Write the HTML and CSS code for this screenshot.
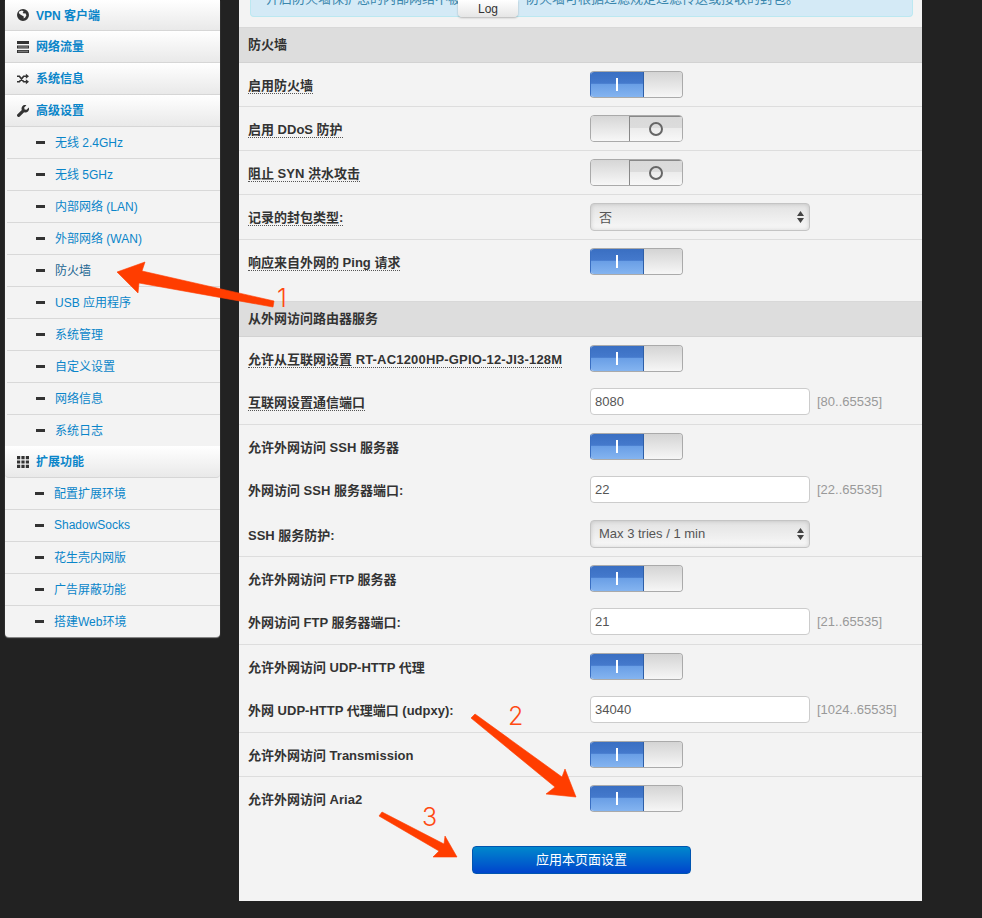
FILE: index.html
```html
<!DOCTYPE html>
<html lang="zh-CN">
    <head>
        <meta charset="UTF-8">
        <meta name="viewport" content="width=device-width, initial-scale=1.0">
        <title>防火墙</title>
        <link rel="stylesheet" href="styles.css">
    </head>
    <body>

<svg class="sprites" width="0" height="0">
    <symbol id="i-globe" viewBox="0 0 12 12">
        <path d="M6 0a6 6 0 1 0 0 12A6 6 0 0 0 6 0zM2.2 2.6 5 1.4l1.6 1L5.6 4 7 4.6l1.4-.4 1 2-1.2 2.4-1.6.9.2-2-2.2-1.2L3 5.2 1.8 4z"/>
    </symbol>
    <symbol id="i-list" viewBox="0 0 12 12">
        <path d="M0 0h12v3H0zM0 4.5h12v3H0zM0 9h12v3H0z"/>
        <path fill="#777" d="M1 5.3h10v1.4H1zM1 9.8h10v1.4H1z"/>
    </symbol>
    <symbol id="i-shuffle" viewBox="0 0 13 12">
        <path fill="none" stroke="#333" stroke-width="1.8" d="M0 3h2.6l4.6 6h3M0 9h2.6l4.6-6h3"/>
        <path d="M9.6.4 13 3 9.6 5.6zM9.6 6.4 13 9l-3.4 2.6z"/>
    </symbol>
    <symbol id="i-wrench" viewBox="0 0 12 12">
        <path d="M11.8 2.6 9.6 4.8 7.6 4.4 7.2 2.4 9.4.2A3.6 3.6 0 0 0 4.8 4.9L.5 9.2a1.6 1.6 0 0 0 2.3 2.3L7.1 7.2A3.6 3.6 0 0 0 11.8 2.6z"/>
    </symbol>
    <symbol id="i-grid" viewBox="0 0 12 12">
        <path d="M0 0h3.2v3.2H0zM4.4 0h3.2v3.2H4.4zM8.8 0H12v3.2H8.8zM0 4.4h3.2v3.2H0zM4.4 4.4h3.2v3.2H4.4zM8.8 4.4H12v3.2H8.8zM0 8.8h3.2V12H0zM4.4 8.8h3.2V12H4.4zM8.8 8.8H12V12H8.8z"/>
    </symbol>
</svg>

<div class="layout">
    <ul class="sidebar">
        <li class="nav-head first"><svg class="icon"><use href="#i-globe"/></svg><a>VPN 客户端</a></li>
        <li class="nav-head"><svg class="icon"><use href="#i-list"/></svg><a>网络流量</a></li>
        <li class="nav-head"><svg class="icon"><use href="#i-shuffle"/></svg><a>系统信息</a></li>
        <li class="nav-head"><svg class="icon"><use href="#i-wrench"/></svg><a>高级设置</a></li>
        <li class="nav-item"><i class="minus"></i><a>无线 2.4GHz</a></li>
        <li class="nav-item"><i class="minus"></i><a>无线 5GHz</a></li>
        <li class="nav-item"><i class="minus"></i><a>内部网络 (LAN)</a></li>
        <li class="nav-item"><i class="minus"></i><a>外部网络 (WAN)</a></li>
        <li class="nav-item active"><i class="minus"></i><a>防火墙</a></li>
        <li class="nav-item"><i class="minus"></i><a>USB 应用程序</a></li>
        <li class="nav-item"><i class="minus"></i><a>系统管理</a></li>
        <li class="nav-item"><i class="minus"></i><a>自定义设置</a></li>
        <li class="nav-item"><i class="minus"></i><a>网络信息</a></li>
        <li class="nav-item last"><i class="minus"></i><a>系统日志</a></li>
        <li class="nav-head ext"><svg class="icon"><use href="#i-grid"/></svg><a>扩展功能</a></li>
        <li class="nav-item ext-item"><i class="minus"></i><a>配置扩展环境</a></li>
        <li class="nav-item ext-item"><i class="minus"></i><a>ShadowSocks</a></li>
        <li class="nav-item ext-item"><i class="minus"></i><a>花生壳内网版</a></li>
        <li class="nav-item ext-item"><i class="minus"></i><a>广告屏蔽功能</a></li>
        <li class="nav-item ext-item last"><i class="minus"></i><a>搭建Web环境</a></li>
    </ul>

    <div class="content">
        <div class="alert"><p>开启防火墙保护您的内部网络不被外部攻击。防火墙可根据过滤规定过滤传送或接收的封包。</p></div>

        <div class="section-title">防火墙</div>
        <div class="row">
            <div class="name"><label class="hint">启用防火墙</label></div>
            <div class="switch on"><span class="switch-a"><b class="bar"></b></span><span class="switch-b"></span></div>
        </div>
        <div class="row">
            <div class="name"><label class="hint">启用 DDoS 防护</label></div>
            <div class="switch off"><span class="switch-a"></span><span class="switch-b"><b class="ring"></b></span></div>
        </div>
        <div class="row">
            <div class="name"><label class="hint">阻止 SYN 洪水攻击</label></div>
            <div class="switch off"><span class="switch-a"></span><span class="switch-b"><b class="ring"></b></span></div>
        </div>
        <div class="row tall">
            <div class="name"><label class="hint">记录的封包类型:</label></div>
            <div class="select"><select><option>否</option></select><svg class="updown" viewBox="0 0 7 12"><path d="M3.5 0 7 5H0zM0 7h7l-3.5 5z"/></svg></div>
        </div>
        <div class="row end">
            <div class="name"><label class="hint">响应来自外网的 Ping 请求</label></div>
            <div class="switch on"><span class="switch-a"><b class="bar"></b></span><span class="switch-b"></span></div>
        </div>

        <div class="section-title">从外网访问路由器服务</div>
        <div class="row plain">
            <div class="name"><label class="hint">允许从互联网设置 <span class="model">RT-AC1200HP-GPIO-12-JI3-128M</span></label></div>
            <div class="switch on"><span class="switch-a"><b class="bar"></b></span><span class="switch-b"></span></div>
        </div>
        <div class="row port">
            <div class="name"><label class="hint">互联网设置通信端口</label></div>
            <input type="text" value="8080"><span class="range">[80..65535]</span>
        </div>
        <div class="row plain">
            <div class="name"><label>允许外网访问 SSH 服务器</label></div>
            <div class="switch on"><span class="switch-a"><b class="bar"></b></span><span class="switch-b"></span></div>
        </div>
        <div class="row plain port">
            <div class="name"><label>外网访问 SSH 服务器端口:</label></div>
            <input type="text" value="22"><span class="range">[22..65535]</span>
        </div>
        <div class="row guard">
            <div class="name"><label>SSH 服务防护:</label></div>
            <div class="select"><select><option>Max 3 tries / 1 min</option></select><svg class="updown" viewBox="0 0 7 12"><path d="M3.5 0 7 5H0zM0 7h7l-3.5 5z"/></svg></div>
        </div>
        <div class="row plain">
            <div class="name"><label>允许外网访问 FTP 服务器</label></div>
            <div class="switch on"><span class="switch-a"><b class="bar"></b></span><span class="switch-b"></span></div>
        </div>
        <div class="row port">
            <div class="name"><label>外网访问 FTP 服务器端口:</label></div>
            <input type="text" value="21"><span class="range">[21..65535]</span>
        </div>
        <div class="row plain">
            <div class="name"><label>允许外网访问 UDP-HTTP 代理</label></div>
            <div class="switch on"><span class="switch-a"><b class="bar"></b></span><span class="switch-b"></span></div>
        </div>
        <div class="row port">
            <div class="name"><label>外网 UDP-HTTP 代理端口 (udpxy):</label></div>
            <input type="text" value="34040"><span class="range">[1024..65535]</span>
        </div>
        <div class="row">
            <div class="name"><label>允许外网访问 Transmission</label></div>
            <div class="switch on"><span class="switch-a"><b class="bar"></b></span><span class="switch-b"></span></div>
        </div>
        <div class="row plain">
            <div class="name"><label>允许外网访问 Aria2</label></div>
            <div class="switch on"><span class="switch-a"><b class="bar"></b></span><span class="switch-b"></span></div>
        </div>

        <button class="apply" type="button">应用本页面设置</button>
    </div>
</div>

<button class="log-tab" type="button">Log</button>

<!-- annotations drawn on top of the screenshot -->
<svg class="marks" viewBox="0 0 982 918">
    <path d="M117 272 145 262 142 271 274 301 273 307 139 283 138 293z"/>
    <path d="M475 714 562 777 565 769 576 797 546 794 555 787 471 718z"/>
    <path d="M382 812 444 844 445 836 457 857 433 857 439 851 379 816z"/>
</svg>
<span class="mark-num n1">1</span>
<span class="mark-num n2">2</span>
<span class="mark-num n3">3</span>

</body>
</html>
```

FILE: styles.css
```css
html, body {
    margin: 0;
    height: 100%;
}
body {
    background-color: #222;
    font-family: "Liberation Sans", "Noto Sans CJK SC", sans-serif;
    font-size: 12px;
    color: #333;
    overflow: hidden;
    position: relative;
}
.sprites {
    position: absolute;
}
.layout {
    display: flex;
    align-items: flex-start;
    gap: 19px;
    padding-left: 5px;
}

/* sidebar */
.sidebar {
    width: 215px;
    margin: 0;
    padding: 0;
    list-style: none;
    background-color: #f3f3f3;
    border-radius: 0 0 4px 4px;
    box-shadow: 0 1px 1px rgba(255, 255, 255, 0.5);
}
.sidebar a {
    margin-bottom: 2px;
    color: #0a85c9;
}
.nav-head {
    display: flex;
    align-items: center;
    height: 31px;
    padding-left: 12px;
    background: linear-gradient(#fff, #e9e9e9);
    border-bottom: 1px solid #d6d6d6;
    font-weight: bold;
}
.nav-head.first {
    height: 30px;
}
.nav-head.ext {
    border-radius: 0 0 4px 4px;
}
.icon {
    width: 12px;
    height: 12px;
    margin-right: 7px;
    fill: #333;
}
.nav-item {
    display: flex;
    align-items: center;
    height: 31px;
    margin-left: 2px;
    padding-left: 29px;
    border-bottom: 1px solid #d8d8d8;
}
.nav-item.last {
    height: 31px;
    border-bottom: 0;
}
.nav-item.ext-item {
    margin-left: 0;
    padding-left: 30px;
}
.sidebar .nav-item.active a {
    color: #1a6591;
}
.minus {
    width: 9px;
    height: 3px;
    margin-right: 10px;
    background-color: #333;
}

/* main panel */
.content {
    width: 683px;
    height: 901px;
    background-color: #f3f3f3;
}
.alert {
    height: 16px;
    margin: 0 9px 10px 11px;
    overflow: hidden;
    background-color: #d4eaf6;
    border: 1px solid #bce8f1;
    border-top: 0;
    border-radius: 0 0 4px 4px;
}
.alert p {
    margin: -11px 0 0 15px;
    line-height: 20px;
    font-size: 13px;
    color: #3a87ad;
    white-space: nowrap;
}
.log-tab {
    position: absolute;
    left: 458px;
    top: 0;
    width: 60px;
    height: 17px;
    padding: 0;
    border: 0;
    border-radius: 0 0 4px 4px;
    background: linear-gradient(#fff, #e6e6e6);
    box-shadow: 0 1px 2px rgba(0, 0, 0, 0.25);
    font-family: inherit;
    font-size: 12px;
    color: #333;
}
.section-title {
    height: 34px;
    padding-left: 9px;
    line-height: 34px;
    font-size: 13px;
    font-weight: bold;
    background-color: #ddd;
    border-top: 1px solid #d8d8d8;
    border-bottom: 1px solid #d2d2d2;
}
.row {
    display: flex;
    align-items: center;
    height: 43px;
    padding-left: 9px;
    border-bottom: 1px solid #ddd;
}
.row.tall {
    height: 44px;
}
.row.plain, .row.end {
    border-bottom-color: transparent;
}
.row.end {
    margin-bottom: 17px;
}
.row.port > *, .row.guard .select {
    margin-bottom: 2px;
}
.name {
    flex: none;
    width: 342px;
    font-size: 13px;
    font-weight: bold;
    color: #333;
}
.hint {
    display: inline-block;
    margin-top: 2px;
    line-height: 15px;
    border-bottom: 1px dotted #555;
}
.model {
    letter-spacing: 0.18px;
}

/* switches */
.switch {
    flex: none;
    display: flex;
    width: 91px;
    height: 25px;
    border: 1px solid #aaa;
    border-radius: 4px;
    overflow: hidden;
}
.switch-a, .switch-b {
    display: flex;
    align-items: center;
    justify-content: center;
}
.switch.on {
    border-left-color: #3a6fc2;
}
.switch.on .switch-a {
    width: 53px;
    background: linear-gradient(#3a6fc2 0, #4479cc 45%, #6a9fe6 50%, #84b4f0 100%);
    border-right: 1px solid #2e5fa8;
    box-sizing: border-box;
}
.switch.on .switch-b {
    flex: 1;
    background: linear-gradient(#d4d4d4, #f6f6f6);
}
.switch.off .switch-a {
    width: 38px;
    background: linear-gradient(#d6d6d6, #f7f7f7);
    border-right: 1px solid #888;
}
.switch.off .switch-b {
    flex: 1;
    background: linear-gradient(#d9d9d9 0, #dcdcdc 50%, #ececec 50%, #f8f8f8 100%);
    box-shadow: inset 0 1px 0 #888;
}
.bar {
    width: 2px;
    height: 13px;
    background-color: #fff;
}
.ring {
    width: 10px;
    height: 10px;
    border: 2px solid #666;
    border-radius: 50%;
}

/* form fields */
.row input, .select {
    flex: none;
    box-sizing: border-box;
    width: 220px;
    height: 28px;
    border-radius: 4px;
}
.row input {
    height: 27px;
    padding: 0 3px 0 4px;
    border: 1px solid #ccc;
    background-color: #fff;
    font-family: inherit;
    font-size: 13px;
    color: #555;
}
.select {
    position: relative;
    border: 1px solid #c4c4c4;
    box-shadow: inset 0 0 4px rgba(0, 0, 0, 0.15);
    background: linear-gradient(#e2e2e2, #f8f8f8);
}
.select select {
    appearance: none;
    width: 100%;
    height: 100%;
    padding: 0 0 0 8px;
    border: 0;
    background: none;
    font-family: inherit;
    font-size: 13px;
    color: #555;
}
.updown {
    position: absolute;
    right: 5px;
    top: 7px;
    width: 7px;
    height: 12px;
    fill: #444;
}
.range {
    margin-left: 7px;
    font-size: 13px;
    color: #999;
}
.apply {
    display: block;
    width: 219px;
    height: 28px;
    margin: 25px 0 0 233px;
    padding: 0 0 3px;
    border: 1px solid #0055b0;
    border-radius: 4px;
    background: linear-gradient(#0088cc, #0044cc);
    font-family: inherit;
    font-size: 13px;
    color: #fff;
}

/* annotations */
.marks {
    position: absolute;
    left: 0;
    top: 0;
    width: 982px;
    height: 918px;
    fill: #ff3d00;
    stroke: #ff3d00;
    stroke-width: 0.6;
    stroke-linejoin: round;
}
.mark-num {
    position: absolute;
    font-family: "Inter", sans-serif;
    font-weight: 300;
    font-size: 25px;
    line-height: 28px;
    color: #ff4a12;
}
.n1 {
    left: 277px;
    top: 284px;
}
.n2 {
    left: 508px;
    top: 702px;
}
.n3 {
    left: 422px;
    top: 803px;
}
```
